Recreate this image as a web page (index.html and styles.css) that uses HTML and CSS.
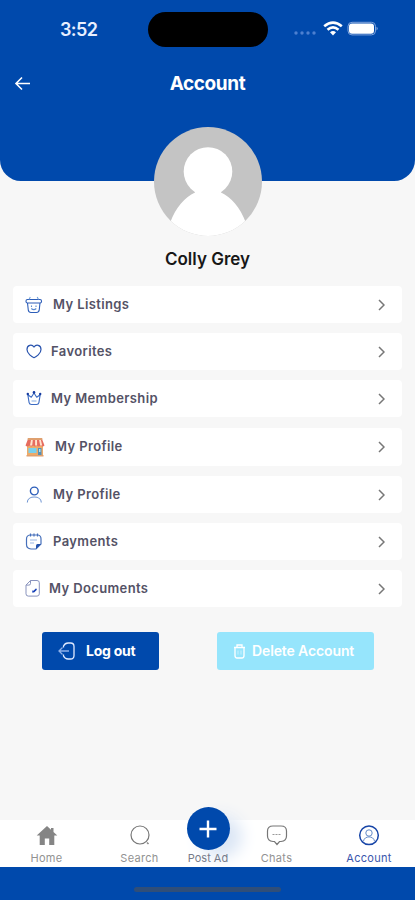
FILE: index.html
```html
<!DOCTYPE html>
<html lang="en">
<head>
<meta charset="utf-8">
<meta name="viewport" content="width=device-width, initial-scale=1">
<title>Account</title>
<link rel="stylesheet" href="styles.css">
</head>
<body>
<div class="screen">
  <header class="hero">
    <div class="status">
      <span class="time">3:52</span>
      <span class="island"></span>
      <svg class="signals" width="90" height="20" viewBox="0 0 90 20">
        <g fill="#4d80d0"><circle cx="4" cy="14" r="1.7"/><circle cx="10" cy="14" r="1.7"/><circle cx="16" cy="14" r="1.7"/><circle cx="22" cy="14" r="1.7"/></g>
        <g fill="none" stroke="#fff" stroke-width="2.6"><path d="M32.200 7.300Q41 -.2 49.800 7.300"/><path d="M35.500 10.800Q41 6.100 46.500 10.800"/></g>
        <path d="M38 13.200Q41 10.800 44 13.200L41 16.500Z" fill="#fff"/>
        <rect x="56" y="3.300" width="27.500" height="12.600" rx="4" fill="none" stroke="#80a4dc" stroke-width="1"/>
        <rect x="57" y="4.500" width="25" height="10.200" rx="3" fill="#fff"/>
        <path d="M84.500 7.800Q87 9.500 84.500 11.400Z" fill="#80a4dc"/>
      </svg>
    </div>
    <div class="titlebar">
      <svg class="back" width="18" height="16" viewBox="0 0 18 16"><path d="M16 7.500H2M8 1.500 2 7.500l6 6" fill="none" stroke="#fff" stroke-width="1.6"/></svg>
      <h1>Account</h1>
    </div>
  </header>

  <section class="profile">
    <svg class="avatar" width="108" height="109" viewBox="0 0 108 109">
      <defs><clipPath id="face"><ellipse cx="54" cy="54.5" rx="54" ry="54.5"/></clipPath></defs>
      <g clip-path="url(#face)"><rect width="108" height="109" fill="#c4c4c4"/><circle cx="54" cy="44.500" r="24.300" fill="#fff"/><path d="M16 96C22 80 31 70 41 65.500V63h26v2.500C77 70 86 80 92 96v13H16Z" fill="#fff"/></g>
    </svg>
    <h2>Colly Grey</h2>
  </section>

  <main class="menu">
    <a class="row listings"><svg class="icon" width="18" height="18" viewBox="0 0 18 18"><g fill="none" stroke="#2c5db8" stroke-width="1.100"><rect x="1" y="3.500" width="15.500" height="3.500" rx="1.500"/><path d="m2.500 7 .8 7.200Q3.700 16.500 6 16.500h5.500q2.300 0 2.700-2.300L15 7"/><path d="M5.300 1 4 3.500M12.200 1l1.300 2.500" stroke="#77a2d9"/><path d="M6.500 9.500V11M11 9.500V11M6.300 12.500q2.500 2.400 5 0" stroke="#5b8ad0"/></g></svg><span>My Listings</span><svg class="chevron" width="7" height="12" viewBox="0 0 7 12"><path d="m1 1 5 5-5 5"/></svg></a>
    <a class="row favorites"><svg class="icon" width="16" height="16" viewBox="0 0 16 16"><path d="M8 13.700C6 12.900 1 9.700 1 5.500 1 .7 6 0 8 3 10 0 15 .7 15 5.500c0 4.200-5 7.400-7 8.200Z" fill="none" stroke="#2a54ae" stroke-width="1.200"/></svg><span>Favorites</span><svg class="chevron" width="7" height="12" viewBox="0 0 7 12"><path d="m1 1 5 5-5 5"/></svg></a>
    <a class="row membership"><svg class="icon" width="16" height="16" viewBox="0 0 16 16"><g fill="none" stroke="#3c6bc2" stroke-width="1.100"><path d="m1.800 3.700 1.300 7.900Q3.500 13.500 5.400 13.500h5.200q1.900 0 2.300-1.900l1.300-7.900-3.500 2.500L8 2 5.300 6.200Z" stroke-linejoin="round"/><path d="M5.500 10h5" stroke="#8fb3e3"/></g><g fill="#163b9e"><circle cx="1.800" cy="3" r="1.200"/><circle cx="8" cy="1.400" r="1.300"/><circle cx="14.200" cy="3" r="1.200"/></g></svg><span>My Membership</span><svg class="chevron" width="7" height="12" viewBox="0 0 7 12"><path d="m1 1 5 5-5 5"/></svg></a>
    <a class="row store"><svg class="icon" width="20" height="19" viewBox="0 0 20 19"><path d="M2 7h16v11H2z" fill="#eeaa68"/><path d="M3.500 10h8v5h-8z" fill="#7ad0ed"/><path d="M13 10h3.500v8H13z" fill="#568eb6"/><path d="M14 11h1.500v3H14z" fill="#a9e4f3"/><path d="M3 1h14l2.500 6.500q-1.900 2-3.900 0-1.900 2-3.800 0-1.800 2-3.700 0-1.800 2-3.700 0-2 2-3.900 0Z" fill="#e66c5f"/><path d="m6 2-1 5.600h2.200L7.800 2Zm4.100 0v5.600h2L12 2Zm4 0 1.100 5.600h2L15.900 2Z" fill="#ffe2cd"/><path d="M2.700 0h14.600v2H2.700zM1.500 17h17v1.500h-17z" fill="#dfa06f"/></svg><span>My Profile</span><svg class="chevron" width="7" height="12" viewBox="0 0 7 12"><path d="m1 1 5 5-5 5"/></svg></a>
    <a class="row person"><svg class="icon" width="18" height="18" viewBox="0 0 18 18"><circle cx="9.300" cy="5" r="3.900" fill="none" stroke="#2b5db9" stroke-width="1.400"/><path d="M2.300 16.500c0-7.300 14-7.300 14 0" fill="none" stroke="#7095d2" stroke-width="1.100"/></svg><span>My Profile</span><svg class="chevron" width="7" height="12" viewBox="0 0 7 12"><path d="m1 1 5 5-5 5"/></svg></a>
    <a class="row payments"><svg class="icon" width="18" height="18" viewBox="0 0 18 18"><g fill="none" stroke="#4670bb" stroke-width="1.200"><path d="M5 2h8q3 .4 3 4v5L11 16H6Q1.500 15.500 1.500 11.500V6Q1.500 2.500 5 2Z"/><path d="M5.500 .5v3M9 .5v3m3.500-3v3"/><path d="M5 7h7M5 10h4" stroke="#9bb8e3"/></g><path d="M11 16v-3.500q0-1.500 1.500-1.500H16Z" fill="#2452ac"/></svg><span>Payments</span><svg class="chevron" width="7" height="12" viewBox="0 0 7 12"><path d="m1 1 5 5-5 5"/></svg></a>
    <a class="row documents"><svg class="icon" width="16" height="18" viewBox="0 0 16 18"><path d="M5.500 .5H12q2.300 0 2.300 2.300v11q0 2.300-2.300 2.300H3.300Q1 16.100 1 13.800V5.100Z" fill="none" stroke="#8993bd"/><path d="M5.500 .5v3q0 1.600-1.600 1.600H1" fill="none" stroke="#8993bd"/><path d="m7.200 10.500 1.300.2 2.600-2.400.8 1.500-2.500 2.400-2 .5Z" fill="#1740b8"/></svg><span>My Documents</span><svg class="chevron" width="7" height="12" viewBox="0 0 7 12"><path d="m1 1 5 5-5 5"/></svg></a>
  </main>

  <div class="actions">
    <button class="logout"><svg width="18" height="18" viewBox="0 0 18 18"><path d="M5.500 5.500V4Q7 1 10 1h2.500Q16 1 16 4.500v9q0 3.500-3.500 3.500H10q-3 0-4.500-3v-1.500" fill="none" stroke="#e0eaff" stroke-width="1.300"/><path d="M11 9H1.500M4.500 5.500 1 9l3.500 3.500" fill="none" stroke="#8eb0e9" stroke-width="1.300"/></svg><span>Log out</span></button>
    <button class="delete"><svg width="13" height="15" viewBox="0 0 13 15"><path d="M1 3.500h11M4 3V1h5v2M2 3.500v8Q2 14 4 14h5q2 0 2-2.500v-8" fill="none" stroke="#fff" stroke-width="1.300"/><path d="M5 6.500v4m3-4v4" stroke="#c9f2ff"/></svg><span>Delete Account</span></button>
  </div>

  <footer>
    <nav>
      <a class="tab home"><svg width="22" height="22" viewBox="0 0 22 22"><path d="M11 1 .7 10.500h3V20h5.100v-6.500h4.400V20h5.100v-9.500h3L17.500 7V3H15v1.700Z" fill="#858585"/></svg><span>Home</span></a>
      <a class="tab search"><svg width="22" height="22" viewBox="0 0 22 22"><circle cx="11" cy="10" r="9" fill="none" stroke="#777" stroke-width="1.200"/><path d="m18 17.500 1.500 1.500" stroke="#888" stroke-width="1.600"/></svg><span>Search</span></a>
      <a class="tab post"><span class="plus"><svg width="18" height="18" viewBox="0 0 18 18"><path d="M9 .5v17M.5 9h17" stroke="#fff" stroke-width="2.400"/></svg></span><span>Post Ad</span></a>
      <a class="tab chats"><svg width="22" height="22" viewBox="0 0 22 22"><path d="M7 1h8q5.500 0 5.500 5v5q0 5-5.500 5.500h-1.500L11 19.500l-2.500-3H7Q1.500 16 1.500 11V6Q1.500 1 7 1Z" fill="none" stroke="#777" stroke-width="1.200"/><path d="M6.500 9.500h9" stroke="#999" stroke-width="1" stroke-dasharray="2 1"/></svg><span>Chats</span></a>
      <a class="tab account"><svg width="22" height="22" viewBox="0 0 22 22"><circle cx="11" cy="10.300" r="9.300" fill="none" stroke="#1745a7" stroke-width="1.500"/><circle cx="11" cy="8" r="3.200" fill="none" stroke="#648bc8"/><path d="M5.500 16c1-5.500 10-5.500 11 0" fill="none" stroke="#648bc8"/></svg><span>Account</span></a>
    </nav>
    <div class="home-area"><span class="indicator"></span></div>
  </footer>
</div>
</body>
</html>
```
FILE: styles.css
```css
* { box-sizing: border-box; }
body { margin: 0; background: #f7f7f7; font-family: Inter, "Liberation Sans", sans-serif; }
.screen { width: 415px; height: 900px; display: flex; flex-direction: column; overflow: hidden; }
svg { display: block; flex-shrink: 0; }
h1, h2 { margin: 0; }
.hero { height: 181px; flex-shrink: 0; background: #0049ac; border-radius: 0 0 21px 21px; padding-top: 11px; }
.status { display: grid; grid-template-columns: 148px 120px 1fr; height: 36px; align-items: center; color: #e8efff; }
.time { padding-left: 60px; font-size: 18px; font-weight: 600; letter-spacing: -.6px; }
.island { height: 35px; border-radius: 18px; background: #000; }
.signals { margin-left: 24px; }
.titlebar { display: grid; grid-template-columns: 40px 1fr 40px; align-items: center; height: 28px; margin-top: 22px; color: #fff; }
.back { margin-left: 14px; }
.titlebar h1 { text-align: center; font-size: 19px; line-height: 28px; font-weight: 700; letter-spacing: -.4px; padding-top: 1px; }
.profile { display: flex; flex-direction: column; align-items: center; height: 159px; margin-top: -54px; flex-shrink: 0; }
.profile h2 { margin-top: 11px; font-size: 17px; line-height: 24px; font-weight: 600; color: #171717; letter-spacing: 0; }
.menu { display: flex; flex-direction: column; gap: 10px; padding: 0 13px; }
.row { height: 37px; border-radius: 4px; background: #fff; display: flex; align-items: center; padding: 0 17px 0 12px; color: #545266; font-size: 13px; font-weight: 600; letter-spacing: .38px; }
.row span { margin-left: 10px; line-height: 18px; padding-bottom: 2px; }
.icon { flex-shrink: 0; }
.chevron { margin-left: auto; fill: none; stroke: #777; stroke-width: 1.5; }
.favorites .icon, .membership .icon { margin-left: 1px; }
.favorites span, .membership span { margin-left: 9px; }
.store { height: 38px; margin-top: 1px; }
.documents span { margin-left: 8px; }
.actions { display: flex; justify-content: space-between; padding: 0 41px 0 42px; margin-top: 25px; }
button { height: 38px; border: 0; border-radius: 3px; color: #fff; font-family: inherit; font-size: 14px; font-weight: 700; display: flex; align-items: center; }
button span { padding-bottom: 1px; }
.logout { width: 117px; background: #0049ac; padding: 0 16px; gap: 10px; letter-spacing: -.25px; }
.delete { width: 157px; background: #96e5fc; padding: 0 16px; gap: 6px; font-weight: 600; letter-spacing: -.12px; }
footer { margin-top: auto; }
nav { display: grid; grid-template-columns: 93px 93px 44px 93px 92px; height: 47px; background: #fff; }
.tab { display: flex; flex-direction: column; align-items: center; padding-top: 5px; color: #929292; font-size: 11px; line-height: 14px; letter-spacing: .3px; }
.tab > span:last-child { margin-top: 4px; white-space: nowrap; }
.tab.post { padding: 0; letter-spacing: 0; }
.plus { width: 43px; height: 43px; margin-top: -13px; border-radius: 50%; background: #0049ac; display: grid; place-items: center; box-shadow: 12px 8px 16px #dbe6f5; }
.post > span:last-child { margin-top: 1px; color: #767b8a; }
.account { color: #3b56ad; }
.home-area { height: 33px; background: #0049ac; display: flex; justify-content: center; padding-top: 20px; position: relative; }
.indicator { width: 147px; height: 5px; border-radius: 3px; background: #304e78; }
```
